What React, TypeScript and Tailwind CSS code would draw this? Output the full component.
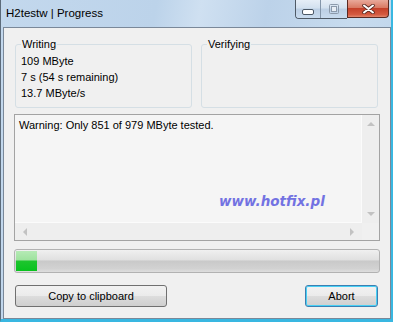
import React from 'react';

const ui = { fontFamily: '"Liberation Sans", Arial, sans-serif' };

const MinGlyph = () => (
  <svg width="12" height="6" viewBox="0 0 12 6">
    <rect x="0.5" y="0.5" width="11" height="5" rx="1.5" fill="#ffffff" stroke="#4b5866" />
  </svg>
);

const MaxGlyph = () => (
  <svg width="10" height="10" viewBox="0 0 10 10">
    <rect x="0.5" y="0.5" width="9" height="9" rx="1" fill="none" stroke="#8c9aab" />
    <rect x="2.5" y="2.5" width="5" height="5" fill="#e8eef5" stroke="#8c9aab" />
  </svg>
);

const CloseGlyph = () => (
  <svg width="13" height="10" viewBox="0 0 13 10">
    <path d="M2 1.5 L11 8.5 M11 1.5 L2 8.5" stroke="#5a2a22" strokeWidth="3.6" strokeLinecap="round" />
    <path d="M2 1.5 L11 8.5 M11 1.5 L2 8.5" stroke="#ffffff" strokeWidth="2" strokeLinecap="round" />
  </svg>
);

const Arrow = ({ dir }: { dir: 'up' | 'down' | 'left' | 'right' }) => {
  const d = {
    up: 'M0 5 L4 1 L8 5 Z',
    down: 'M0 1 L8 1 L4 5 Z',
    left: 'M5 0 L5 8 L1 4 Z',
    right: 'M1 0 L5 4 L1 8 Z',
  }[dir];
  const vertical = dir === 'up' || dir === 'down';
  return (
    <svg width={vertical ? 8 : 6} height={vertical ? 6 : 8} viewBox={vertical ? '0 0 8 6' : '0 0 6 8'}>
      <path d={d} fill="#c2c2c2" />
    </svg>
  );
};

const GroupBox = ({ title, lines }: { title: string; lines: string[] }) => (
  <fieldset className="w-[177px] h-[70px] border border-[#d5dfe5] rounded-[3px] pl-[5px] pt-[2px]">
    <legend className="px-[1px] text-[11px] leading-[13px] text-black">{title}</legend>
    <div className="text-[11px] leading-[16px] text-black">
      {lines.map((l) => (
        <div key={l}>{l}</div>
      ))}
    </div>
  </fieldset>
);

export default function App() {
  return (
    <div
      className="w-[393px] h-[322px] flex flex-col border-l border-l-[#5c6b7a] border-r-2 border-r-[#39b7e1] border-b-[3px] border-b-[#39b7e1] bg-[linear-gradient(100deg,#c3d8ed_0%,#bcd3ea_35%,#cfe0f1_45%,#bcd2e9_60%,#c7dbee_80%,#bdd3ea_100%)]"
      style={ui}
    >
      {/* Title bar */}
      <div className="h-[27px] flex items-start justify-between shrink-0">
        <span className="pl-[5px] pt-[6px] text-[11.5px] leading-[14px] text-black">H2testw | Progress</span>
        <div className="flex mr-[2px]">
          <div className="flex border-l border-b border-[#4f5a66] rounded-bl-[4px] overflow-hidden">
            <div className="w-[25px] h-[18px] flex items-end justify-center pb-[3px] bg-[linear-gradient(to_bottom,#e6eef7_0%,#d3e1ef_45%,#bccfe4_50%,#c9dbee_100%)] border-r border-[#8496aa]">
              <MinGlyph />
            </div>
            <div className="w-[26px] h-[18px] flex items-center justify-center bg-[linear-gradient(to_bottom,#e6eef7_0%,#d3e1ef_45%,#bccfe4_50%,#c9dbee_100%)]">
              <MaxGlyph />
            </div>
          </div>
          <div className="w-[42px] h-[18px] flex items-center justify-center border-l border-b border-r border-[#5a2a22] rounded-br-[4px] bg-[linear-gradient(to_bottom,#e9a99a_0%,#d97a64_45%,#c5412a_50%,#d45a40_85%,#e3866c_100%)]">
            <CloseGlyph />
          </div>
        </div>
      </div>

      {/* Client area */}
      <div className="flex-1 ml-[2px] border border-[#7a8899] bg-[#f0f0f0] px-[10px] pt-[10px] text-[11px] leading-[13px] text-black">
        <div className="flex gap-[9px] pl-[1px]">
          <GroupBox title="Writing" lines={['109 MByte', '7 s (54 s remaining)', '13.7 MByte/s']} />
          <GroupBox title="Verifying" lines={[]} />
        </div>

        {/* Log box */}
        <div className="relative mt-[6px] h-[127px] border border-[#a3a3a3] grid grid-cols-[1fr_17px] grid-rows-[1fr_17px]">
          <div className="bg-[#f5f5f5] pl-[4px] pt-[4px] border-r border-b border-[#fbfbfb]">
            Warning: Only 851 of 979 MByte tested.
          </div>
          <div className="bg-[#eeeeee] flex flex-col items-center justify-between py-[6px]">
            <Arrow dir="up" />
            <Arrow dir="down" />
          </div>
          <div className="bg-[#eeeeee] flex items-center justify-between px-[7px]">
            <Arrow dir="left" />
            <Arrow dir="right" />
          </div>
          <div className="bg-[#f0f0f0]" />
          <span
            className="absolute left-[204px] top-[78px] text-[13.5px] leading-[16px] font-bold italic text-[#7272e2]"
            style={{ fontFamily: '"DejaVu Sans", Verdana, sans-serif' }}
          >
            www.hotfix.pl
          </span>
        </div>

        {/* Progress bar */}
        <div className="mt-[8px] h-[24px] border border-[#b2b2b2] rounded-[3px] overflow-hidden p-[1px] bg-[linear-gradient(to_bottom,#f0f0f0_0%,#e0e0e0_45%,#c9c9c9_50%,#d2d2d2_85%,#dedede_100%)]">
          <div className="h-full w-[21px] bg-[linear-gradient(to_bottom,#b5eab5_0%,#9ee29e_45%,#1ec52e_50%,#08c21e_100%)]" />
        </div>

        {/* Buttons */}
        <div className="mt-[12px] flex justify-between pl-[1px] pr-[2px]">
          <button className="w-[152px] h-[22px] border border-[#707070] rounded-[3px] bg-[linear-gradient(to_bottom,#f2f2f2_0%,#ebebeb_48%,#dddddd_50%,#cfcfcf_100%)] text-[11px] text-black">
            Copy to clipboard
          </button>
          <button className="w-[73px] h-[22px] border border-[#3c7fb1] rounded-[3px] shadow-[inset_0_0_0_1px_#48d0f5] bg-[linear-gradient(to_bottom,#f2f2f2_0%,#ebebeb_48%,#dddddd_50%,#cfcfcf_100%)] text-[11px] text-black">
            Abort
          </button>
        </div>
      </div>
    </div>
  );
}
